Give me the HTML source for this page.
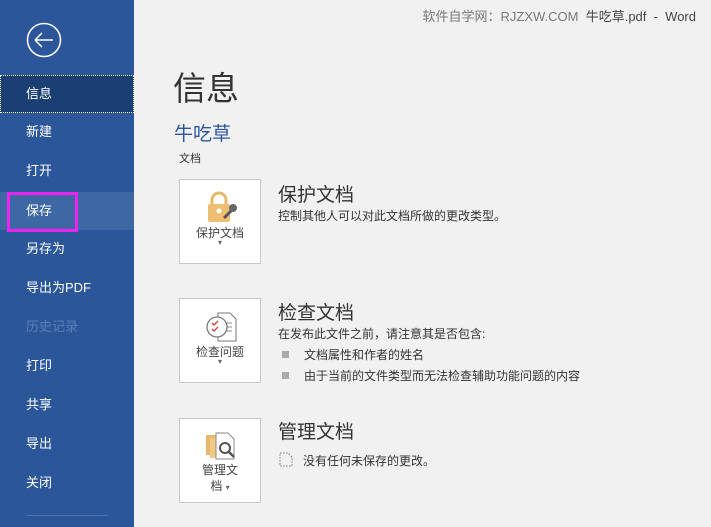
<!DOCTYPE html>
<html><head><meta charset="utf-8"><style>
*{margin:0;padding:0;box-sizing:border-box}
body{width:711px;height:527px;overflow:hidden;background:#f1f1f1;font-family:"Liberation Sans","Noto Sans CJK SC",sans-serif;position:relative}
#side{position:absolute;left:0;top:0;width:134px;height:527px;background:#2b579a}
.it{position:absolute;left:0;width:134px;height:38px;color:#fff;font-size:13px;line-height:38px;padding-left:26px}
.sel{background:#1a3f73;outline:1px dotted #fff;outline-offset:-1px}
.hov{background:#3e68a4}
.dis{color:#5a7fb8}
.abs{position:absolute}
.box{position:absolute;left:179px;width:82px;height:85px;background:#fff;border:1px solid #c6c6c6;font-size:12px;color:#444;text-align:center}
h2{position:absolute;font-weight:normal;font-size:19px;color:#333}
.t{position:absolute;font-size:12px;color:#333}
.sq{display:inline-block;width:7px;height:7px;background:#aaa;margin-right:15px;vertical-align:1px}
</style></head><body>
<div id="side">
<svg class="abs" style="left:26px;top:22px" width="36" height="36"><circle cx="18" cy="18" r="16.5" fill="none" stroke="#fff" stroke-width="1.5"/><path d="M9 18H27M9 18L16 11M9 18L16 25" stroke="#fff" stroke-width="1.5" fill="none"/></svg>
<div class="it sel" style="top:75px">信息</div>
<div class="it" style="top:113px">新建</div>
<div class="it" style="top:152px">打开</div>
<div class="it hov" style="top:192px">保存</div>
<div class="abs" style="left:7px;top:192px;width:71px;height:40px;border:3px solid #ee22ee"></div>
<div class="it" style="top:230px">另存为</div>
<div class="it" style="top:269px">导出为PDF</div>
<div class="it dis" style="top:308px">历史记录</div>
<div class="it" style="top:347px">打印</div>
<div class="it" style="top:386px">共享</div>
<div class="it" style="top:425px">导出</div>
<div class="it" style="top:464px">关闭</div>
<div class="abs" style="left:26px;top:515px;width:82px;height:1px;background:#4a72ad"></div>
</div>
<div class="abs" style="right:15px;top:6px;font-size:13px;color:#777">软件自学网：RJZXW.COM&nbsp;&nbsp;<span style="color:#444">牛吃草.pdf&nbsp; - &nbsp;Word</span></div>
<div class="abs" style="left:173px;top:62px;font-size:33px;color:#333">信息</div>
<div class="abs" style="left:174px;top:119px;font-size:19px;color:#2b579a">牛吃草</div>
<div class="t" style="left:179px;top:150px;font-size:11px">文档</div>

<div class="box" style="top:179px">
<svg class="abs" style="left:24px;top:10px" width="36" height="36"><path d="M8 14V10a7 7 0 0 1 14 0v4" fill="none" stroke="#e8b86a" stroke-width="3"/><rect x="4" y="14" width="22" height="18" rx="2" fill="#eebf72"/><circle cx="15" cy="21" r="2.5" fill="#fff"/><path d="M20 28l8-8" stroke="#555" stroke-width="3"/><circle cx="29" cy="18" r="4" fill="#666"/></svg>
<div class="abs" style="left:0;right:0;top:44px">保护文档</div>
<div class="abs" style="left:0;right:0;top:58px;font-size:8px;color:#666">▾</div>
</div>
<h2 style="left:278px;top:180px">保护文档</h2>
<div class="t" style="left:278px;top:207px">控制其他人可以对此文档所做的更改类型。</div>

<div class="box" style="top:298px">
<svg class="abs" style="left:24px;top:10px" width="36" height="36"><path d="M14 4h12l6 6v22H14z" fill="#fff" stroke="#777"/><path d="M20 14h8M20 18h8M20 22h8" stroke="#888"/><circle cx="13" cy="18" r="10" fill="#fff" stroke="#777" stroke-width="1.3"/><path d="M8 14l2 2 4-4M8 20l2 2 4-4" stroke="#d9463a" stroke-width="1.4" fill="none"/></svg>
<div class="abs" style="left:0;right:0;top:44px">检查问题</div>
<div class="abs" style="left:0;right:0;top:58px;font-size:8px;color:#666">▾</div>
</div>
<h2 style="left:278px;top:298px">检查文档</h2>
<div class="t" style="left:278px;top:325px">在发布此文件之前，请注意其是否包含:</div>
<div class="t" style="left:282px;top:346px"><span class="sq"></span>文档属性和作者的姓名</div>
<div class="t" style="left:282px;top:367px"><span class="sq"></span>由于当前的文件类型而无法检查辅助功能问题的内容</div>

<div class="box" style="top:418px">
<svg class="abs" style="left:24px;top:10px" width="36" height="36"><rect x="2" y="6" width="14" height="20" fill="#e8b86a"/><rect x="6" y="9" width="14" height="20" fill="#f0c985"/><path d="M12 4h12l6 6v20H12z" fill="#fff" stroke="#888"/><circle cx="21" cy="19" r="5" fill="none" stroke="#555" stroke-width="2"/><path d="M25 23l5 5" stroke="#555" stroke-width="2.5"/></svg>
<div class="abs" style="left:0;right:0;top:42px">管理文</div>
<div class="abs" style="left:0;right:0;top:58px">档 <span style="font-size:8px;color:#666">▾</span></div>
</div>
<h2 style="left:278px;top:417px">管理文档</h2>
<svg class="abs" style="left:279px;top:452px" width="14" height="15"><path d="M1 1h8l4 4v9H1z" fill="none" stroke="#777" stroke-dasharray="1.5 1.5"/></svg>
<div class="t" style="left:303px;top:452px">没有任何未保存的更改。</div>
</body></html>
